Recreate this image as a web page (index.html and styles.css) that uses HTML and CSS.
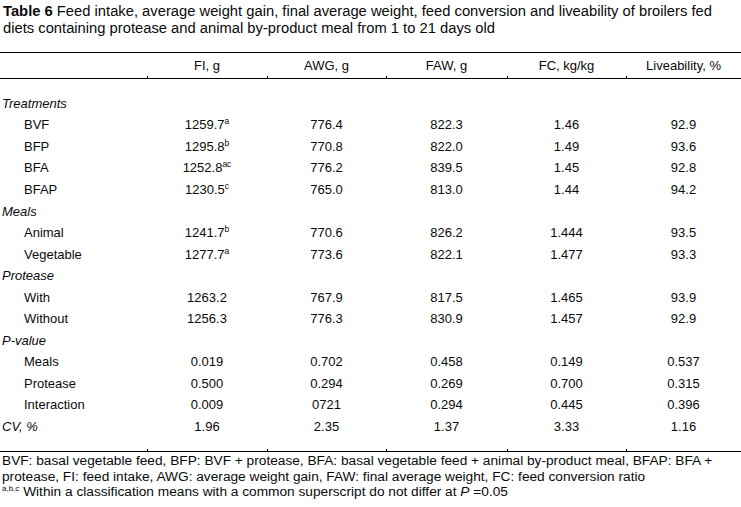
FILE: index.html
```html
<!DOCTYPE html>
<html lang="en">
<head>
<meta charset="utf-8">
<title>Table 6</title>
<link rel="stylesheet" href="styles.css">
</head>
<body>
<div class="caption"><b>Table 6</b> Feed intake, average weight gain, final average weight, feed conversion and liveability of broilers fed<br>diets containing protease and animal by-product meal from 1 to 21 days old</div>
<table class="data">
  <colgroup>
    <col class="c-label"><col class="c1"><col class="c2"><col class="c3"><col class="c4"><col class="c5">
  </colgroup>
  <thead>
    <tr class="head">
      <th></th><th>FI, g</th><th>AWG, g</th><th>FAW, g</th><th>FC, kg/kg</th><th>Liveability, %</th>
    </tr>
  </thead>
  <tbody>
    <tr class="spacer"><td></td><td></td><td></td><td></td><td></td><td></td></tr>
    <tr class="group"><td>Treatments</td><td></td><td></td><td></td><td></td><td></td></tr>
    <tr><td class="sub">BVF</td><td>1259.7<sup>a</sup></td><td>776.4</td><td>822.3</td><td>1.46</td><td>92.9</td></tr>
    <tr><td class="sub">BFP</td><td>1295.8<sup>b</sup></td><td>770.8</td><td>822.0</td><td>1.49</td><td>93.6</td></tr>
    <tr><td class="sub">BFA</td><td>1252.8<sup>ac</sup></td><td>776.2</td><td>839.5</td><td>1.45</td><td>92.8</td></tr>
    <tr><td class="sub">BFAP</td><td>1230.5<sup>c</sup></td><td>765.0</td><td>813.0</td><td>1.44</td><td>94.2</td></tr>
    <tr class="group"><td>Meals</td><td></td><td></td><td></td><td></td><td></td></tr>
    <tr><td class="sub">Animal</td><td>1241.7<sup>b</sup></td><td>770.6</td><td>826.2</td><td>1.444</td><td>93.5</td></tr>
    <tr><td class="sub">Vegetable</td><td>1277.7<sup>a</sup></td><td>773.6</td><td>822.1</td><td>1.477</td><td>93.3</td></tr>
    <tr class="group"><td>Protease</td><td></td><td></td><td></td><td></td><td></td></tr>
    <tr><td class="sub">With</td><td>1263.2</td><td>767.9</td><td>817.5</td><td>1.465</td><td>93.9</td></tr>
    <tr><td class="sub">Without</td><td>1256.3</td><td>776.3</td><td>830.9</td><td>1.457</td><td>92.9</td></tr>
    <tr class="group"><td>P-value</td><td></td><td></td><td></td><td></td><td></td></tr>
    <tr><td class="sub">Meals</td><td>0.019</td><td>0.702</td><td>0.458</td><td>0.149</td><td>0.537</td></tr>
    <tr><td class="sub">Protease</td><td>0.500</td><td>0.294</td><td>0.269</td><td>0.700</td><td>0.315</td></tr>
    <tr><td class="sub">Interaction</td><td>0.009</td><td>0721</td><td>0.294</td><td>0.445</td><td>0.396</td></tr>
    <tr class="group cv"><td>CV, %</td><td>1.96</td><td>2.35</td><td>1.37</td><td>3.33</td><td>1.16</td></tr>
    <tr class="spacer end"><td></td><td></td><td></td><td></td><td></td><td></td></tr>
  </tbody>
</table>
<div class="notes">
  <p>BVF: basal vegetable feed, BFP: BVF + protease, BFA: basal vegetable feed + animal by-product meal, BFAP: BFA +</p>
  <p>protease, FI: feed intake, AWG: average weight gain, FAW: final average weight, FC: feed conversion ratio</p>
  <p><sup>a,b,c</sup> Within a classification means with a common superscript do not differ at <i>P</i> =0.05</p>
</div>
</body>
</html>
```
FILE: styles.css
```css
html, body {
  margin: 0;
  padding: 0;
  background: #fff;
}
body {
  font-family: "Liberation Sans", Arial, sans-serif;
  font-size: 13px;
  color: #0a0a0a;
  width: 741px;
}
.caption {
  padding: 3px 2px 0 3px;
  font-size: 14.75px;
  line-height: 16.5px;
  height: 33px;
  margin-bottom: 16px;
  white-space: nowrap;
}
.caption b {
  font-weight: bold;
}
.data {
  width: 741px;
  border-collapse: collapse;
  table-layout: fixed;
  border-top: 1px solid #000;
  border-bottom: 1px solid #000;
}
.c-label { width: 147px; }
.c1 { width: 120px; }
.c2 { width: 119px; }
.c3 { width: 121px; }
.c4 { width: 119px; }
.c5 { width: 115px; }
.data th,
.data td {
  padding: 0;
  text-align: center;
  font-weight: normal;
  white-space: nowrap;
}
.head th {
  height: 25px;
  border-bottom: 1px solid #000;
}
.head th + th,
.end td + td {
  background: linear-gradient(#000, #000) left bottom / 1px 2px no-repeat;
}
.data tbody tr {
  height: 21.55px;
}
.data tbody tr.spacer {
  height: 14px;
}
.data tbody tr.spacer.end {
  height: 14.5px;
}
.data td:first-child {
  text-align: left;
  padding-left: 2px;
}
.data td.sub {
  padding-left: 24px;
}
.group td:first-child {
  font-style: italic;
}
.data sup {
  font-size: 8.5px;
  line-height: 0;
  vertical-align: 5px;
}
.notes {
  margin-top: 1px;
  font-size: 13.7px;
}
.notes p {
  margin: 0;
  padding-left: 2px;
  line-height: 15.5px;
  white-space: nowrap;
}
.notes sup {
  font-size: 8px;
  line-height: 0;
  vertical-align: 5px;
}
```
